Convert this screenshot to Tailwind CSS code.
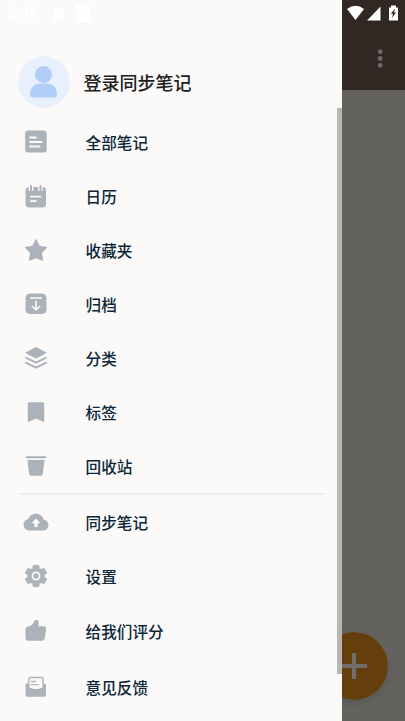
<!DOCTYPE html>
<html lang="zh-CN">
<head>
<meta charset="utf-8">
<title>笔记</title>
<script src="https://cdn.jsdelivr.net/npm/@tailwindcss/browser@4"></script>
</head>
<body class="relative h-[721px] w-[405px] overflow-hidden bg-[#63625e] font-['Noto_Sans_CJK_SC',sans-serif]">
<div class="flex h-full">
  <aside class="relative h-full w-[342px] shrink-0 bg-[#fbfaf8]">
    <div class="flex h-7 items-center pl-[7px] text-white">
      <span class="w-[46px] font-[Roboto,sans-serif] text-base font-medium">5:46</span>
      <svg class="h-[18px] w-10" viewBox="0 0 40 18" fill="#fff"><rect y="3" width="11" height="12" rx="1"/><path d="M3 12l2.500-6L8 12M4 10h3" fill="none" stroke="#fbfaf8"/><rect x="23" y="0" width="15" height="17" rx="1.500"/><path d="M26 4h5M26 9h9M26 13h9" stroke="#fbfaf8"/></svg>
    </div>
    <header class="flex h-[87px] items-center gap-[13.5px] pt-[21px] pl-[18px]">
      <svg class="size-[52px]" viewBox="0 0 52 52"><circle cx="26" cy="26" r="25.800" fill="#e8f0fe"/><circle cx="25.500" cy="18.500" r="8.500" fill="#b1cef8"/><path d="M12 38c0-7 5-10.500 10-10.500h7c5 0 10 3.500 10 10.500 0 2.500-1 3.500-3 3.500H15c-2 0-3-1-3-3.500z" fill="#b1cef8"/></svg>
      <h1 class="text-[18px] leading-6 font-medium text-[#20201f]">登录同步笔记</h1>
    </header>
    <nav class="text-[15.6px] leading-6 font-medium text-[#0b2639]">
      <ul class="*:flex *:h-[54px] *:items-center *:gap-[36.6px] *:pl-[23px] *:[&>span]:pb-px *:[&>svg]:size-[26px] *:[&>svg]:fill-[#abb2b9]">
        <li><svg viewBox="0 0 26 26"><rect x="2.200" y="1.500" width="21.500" height="22" rx="3"/><path d="M7 8.500h6M7 13h11.500M7 17.500h9.500" fill="none" stroke="#fbfaf8" stroke-width="1.800" stroke-linecap="round"/></svg><span>全部笔记</span></li>
        <li><svg viewBox="0 0 26 26"><rect x="2.500" y="4" width="20.500" height="20.500" rx="3.500"/><path d="M8 1v7M17.500 1v7" stroke="#fbfaf8" stroke-width="4.600"/><path d="M8 3v4.500M17.500 3v4.500" stroke="#abb2b9" stroke-width="2" stroke-linecap="round"/><path d="M8 13.700h9.500M8 18.200h5" stroke="#fbfaf8" stroke-width="1.800" stroke-linecap="round"/></svg><span>日历</span></li>
        <li><svg viewBox="0 0 26 26"><path d="M13 3l3.200 6.500 7 1-5 5.200 1.100 7.300-6.300-2.600-6.300 2.600 1.100-7.300-5-5.200 7-1z" stroke="#abb2b9" stroke-width="1.500" stroke-linejoin="round"/></svg><span>收藏夹</span></li>
        <li><svg viewBox="0 0 26 26"><rect x="2.500" y="2.500" width="21" height="20.500" rx="4.500"/><path d="M7 7h12M13 9.700v9M9 15l4 3.800 4-3.800" fill="none" stroke="#fbfaf8" stroke-width="1.700"/></svg><span>归档</span></li>
        <li><svg viewBox="0 0 26 26"><path d="M13 2L24 7.800 13 13.500 2 7.800z"/><path d="M2.300 12.500L13 17.700l10.700-5.200M2.300 17.300L13 22.700l10.700-5.400" fill="none" stroke="#abb2b9" stroke-width="1.900"/></svg><span>分类</span></li>
        <li><svg viewBox="0 0 26 26"><path d="M6.500 3.300h13c1 0 1.700.7 1.700 1.700v18.300L13 19.500l-8.200 3.800V5c0-1 .7-1.700 1.700-1.700z"/></svg><span>标签</span></li>
        <li><svg viewBox="0 0 26 26"><path d="M3 3.300h20v2H3zM4.500 7h17l-1.600 13.500c-.2 1.500-1 2.200-2.400 2.200h-9c-1.400 0-2.200-.7-2.400-2.200z"/></svg><span>回收站</span></li>
      </ul>
      <hr class="mr-[18px] ml-[18px] border-0 border-t-2 border-[#efeeec]">
      <ul class="*:flex *:items-center *:gap-[36.6px] *:pl-[23px] *:[&>svg]:size-[26px] *:[&>svg]:fill-[#abb2b9]">
        <li class="h-[54px]"><svg viewBox="0 0 26 26"><path d="M7 21.500C3 21.500.5 19 .5 15.500c0-3 2-5.300 5-5.800C6.700 6.500 9.500 4.700 13 4.700c4 0 7 2.500 7.700 6.100 2.700.2 4.800 2.400 4.800 5.200 0 3.100-2.300 5.500-5.500 5.500z"/><path d="M13 9.500l4.500 4.700h-2.800V18h-3.400v-3.800H8.500z" fill="#fbfaf8"/></svg><span class="pb-px">同步笔记</span></li>
        <li class="h-[54px]"><svg viewBox="0 0 26 26"><path d="M10.200 2.200h5.600l.6 3.200 1.600.9 3.100-1.100 2.700 4.800-2.400 2.100v1.800l2.400 2.100-2.700 4.800-3.100-1.100-1.600.9-.6 3.200h-5.600l-.6-3.200-1.600-.9-3.100 1.100L2.200 16l2.400-2.100v-1.800L2.200 10l2.700-4.800L8 6.300l1.600-.9z" stroke="#abb2b9" stroke-width=".6" stroke-linejoin="round"/><circle cx="13" cy="13" r="3.600" fill="none" stroke="#fbfaf8" stroke-width="1.700"/></svg><span class="pb-px">设置</span></li>
        <li class="h-[56px]"><svg viewBox="0 0 26 26"><path d="M2.500 11.300c0-1.600.9-2.500 2.500-2.700 2.800-.4 4.400-1.700 5.700-4.400.7-1.500 1.500-2.100 2.600-2.100 2 0 2.700 1.400 2.400 3.400L15.300 8.300h5c2 0 3.100 1.100 2.800 3.100l-1.300 8.300c-.3 2-1.500 3-3.300 3H5c-1.500 0-2.500-1-2.500-2.600z"/></svg><span>给我们评分</span></li>
        <li class="h-[56px]"><svg viewBox="0 0 26 26"><path d="M4.500 9.500c-1.300 0-2 .7-2 2v9.200c0 1.300.7 2 2 2H21c1.300 0 2-.7 2-2v-9.200c0-1.300-.7-2-2-2z"/><rect x="5.200" y="2.800" width="15.500" height="13" rx="1.700"/><path d="M6.500 4.200h12.900v9.300Q13 16.500 6.500 13.500z" fill="#fbfaf8"/><path d="M8.500 7.500h4M8.500 10.700h6.500" stroke="#abb2b9" stroke-width="1.300" stroke-linecap="round"/></svg><span>意见反馈</span></li>
      </ul>
    </nav>
    <div class="absolute top-[108px] right-0 h-[566px] w-[5px] bg-[#b7b6b4]"></div>
  </aside>
  <main class="relative min-w-0 flex-1 overflow-hidden">
    <div class="flex h-[90px] flex-col bg-[#322823]">
      <svg class="h-7 w-[63px]" viewBox="0 0 63 28" fill="#fff"><path d="M5 9Q13.500 2.500 22 9L13.500 20zM38.500 6.500V20.500H25zM47 7.500h2V5.500h5v2h2V20.500h-9z"/><path d="M53 8.500l-4.200 5.200H51L50 18l4-5.500h-2z" fill="#322823"/></svg>
      <svg class="mt-5 ml-[33px] h-5 w-[10px]" viewBox="0 0 10 20" fill="#706a66"><circle cx="5.200" cy="3.700" r="2.400"/><circle cx="5.200" cy="10.500" r="2.400"/><circle cx="5.200" cy="17.300" r="2.400"/></svg>
    </div>
    <svg class="absolute top-[632px] left-[-22px] size-[68px] rounded-full shadow-[0_3px_6px_rgba(0,0,0,0.12)]" viewBox="0 0 68 68"><circle cx="34" cy="34" r="34" fill="#643e0c"/><path d="M34 21v26M21 34h26" stroke="#706e69" stroke-width="4.200"/></svg>
  </main>
</div>
</body>
</html>
